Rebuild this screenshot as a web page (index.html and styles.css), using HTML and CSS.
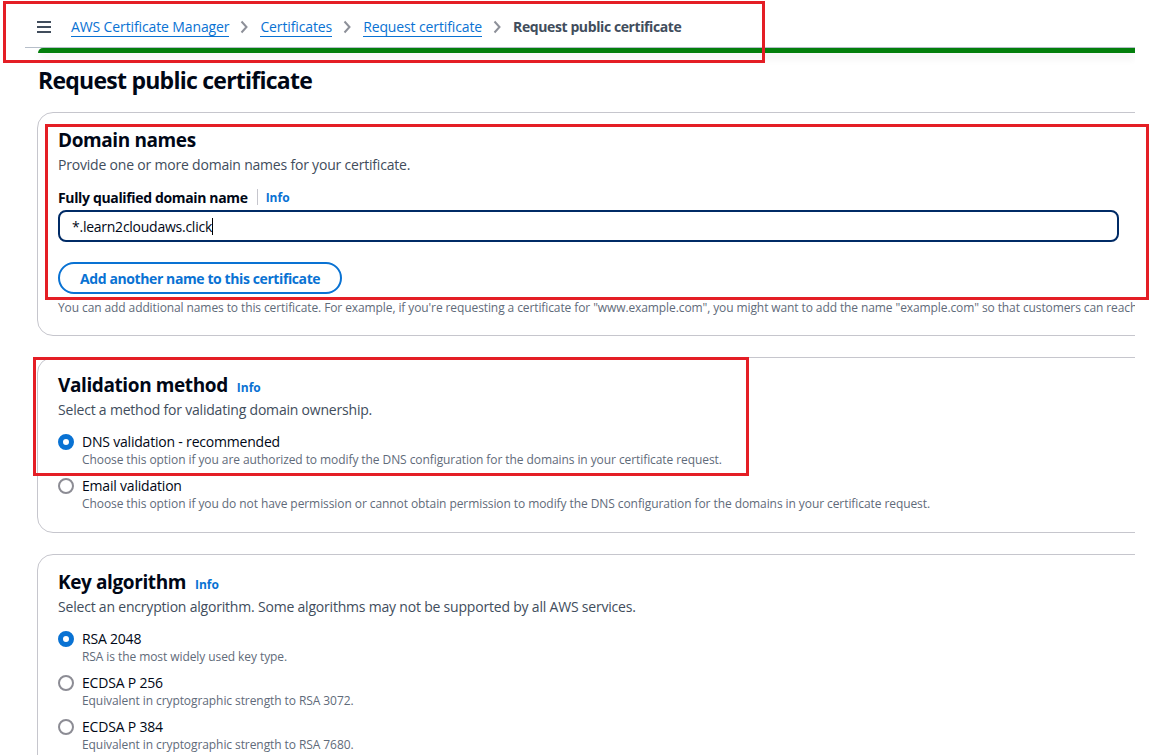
FILE: index.html
```html
<!DOCTYPE html>
<html lang="en">
<head>
<meta charset="utf-8">
<title>Request public certificate</title>
<link rel="stylesheet" href="styles.css">
</head>
<body>
<div class="viewport">
  <header class="topbar">
    <button class="menu" aria-label="Menu">
      <svg width="16" height="14" viewBox="0 0 16 14"><rect x="1" y="1" width="14" height="2" fill="#414d5c"/><rect x="1" y="6" width="14" height="2" fill="#414d5c"/><rect x="1" y="11" width="14" height="2" fill="#414d5c"/></svg>
    </button>
    <nav class="crumbs">
      <a class="crumb" href="#">AWS Certificate Manager</a>
      <span class="sep"><svg width="10" height="14" viewBox="0 0 10 14"><path d="M2.5 1.5 L7.5 7 L2.5 12.5" fill="none" stroke="#8d9099" stroke-width="2"/></svg></span>
      <a class="crumb" href="#">Certificates</a>
      <span class="sep"><svg width="10" height="14" viewBox="0 0 10 14"><path d="M2.5 1.5 L7.5 7 L2.5 12.5" fill="none" stroke="#8d9099" stroke-width="2"/></svg></span>
      <a class="crumb" href="#">Request certificate</a>
      <span class="sep"><svg width="10" height="14" viewBox="0 0 10 14"><path d="M2.5 1.5 L7.5 7 L2.5 12.5" fill="none" stroke="#8d9099" stroke-width="2"/></svg></span>
      <span class="current">Request public certificate</span>
    </nav>
  </header>
  <div class="flash"></div>

  <main class="content">
    <h1 class="title">Request public certificate</h1>

    <section class="card">
      <h2 class="card-title">Domain names</h2>
      <p class="desc">Provide one or more domain names for your certificate.</p>
      <div class="label-row"><span class="label">Fully qualified domain name</span><span class="divider"></span><a class="info" href="#">Info</a></div>
      <div class="input"><span class="value">*.learn2cloudaws.click</span><span class="caret"></span></div>
      <button class="btn">Add another name to this certificate</button>
      <p class="hint">You can add additional names to this certificate. For example, if you're requesting a certificate for "www.example.com", you might want to add the name "example.com" so that customers can reach your site by either name.</p>
    </section>

    <section class="card card-radios">
      <h2 class="card-title">Validation method <a class="info" href="#">Info</a></h2>
      <p class="desc">Select a method for validating domain ownership.</p>
      <div class="radios">
        <div class="radio">
          <span class="dot checked"></span>
          <div class="radio-text"><div class="radio-label">DNS validation - recommended</div><div class="radio-desc">Choose this option if you are authorized to modify the DNS configuration for the domains in your certificate request.</div></div>
        </div>
        <div class="radio">
          <span class="dot"></span>
          <div class="radio-text"><div class="radio-label">Email validation</div><div class="radio-desc">Choose this option if you do not have permission or cannot obtain permission to modify the DNS configuration for the domains in your certificate request.</div></div>
        </div>
      </div>
    </section>

    <section class="card card-radios">
      <h2 class="card-title">Key algorithm <a class="info" href="#">Info</a></h2>
      <p class="desc">Select an encryption algorithm. Some algorithms may not be supported by all AWS services.</p>
      <div class="radios">
        <div class="radio">
          <span class="dot checked"></span>
          <div class="radio-text"><div class="radio-label">RSA 2048</div><div class="radio-desc">RSA is the most widely used key type.</div></div>
        </div>
        <div class="radio">
          <span class="dot"></span>
          <div class="radio-text"><div class="radio-label">ECDSA P 256</div><div class="radio-desc">Equivalent in cryptographic strength to RSA 3072.</div></div>
        </div>
        <div class="radio">
          <span class="dot"></span>
          <div class="radio-text"><div class="radio-label">ECDSA P 384</div><div class="radio-desc">Equivalent in cryptographic strength to RSA 7680.</div></div>
        </div>
      </div>
    </section>
  </main>
</div>

<div class="mark mark-top"></div>
<div class="mark mark-domain"></div>
<div class="mark mark-validation"></div>
</body>
</html>
```

FILE: styles.css
```css
* { box-sizing: border-box; }
html, body { margin: 0; padding: 0; background: #fff; }
body {
  position: relative;
  font-family: "Open Sans", "Noto Sans", "Liberation Sans", sans-serif;
  color: #000716;
  height: 755px;
  overflow: hidden;
}
.viewport {
  width: 1135px;
  overflow: hidden;
  height: 755px;
}
.topbar {
  margin-left: 25px;
  height: 48px;
  border-bottom: 1px solid #b6bec9;
  display: flex;
  align-items: center;
  padding-left: 11px;
  padding-top: 7px;
}
.menu {
  border: 0;
  background: none;
  padding: 0;
  width: 16px;
  height: 14px;
  display: flex;
}
.crumbs {
  display: flex;
  align-items: center;
  margin-left: 19px;
  font-size: 14px;
  line-height: 20px;
}
.crumb {
  color: #0972d3;
  text-decoration: none;
  border-bottom: 1px solid #0972d3;
  line-height: 18px;
  letter-spacing: -0.12px;
}
.sep {
  display: flex;
  margin: 0 11px 0 10px;
}
.current {
  color: #414d5c;
  font-weight: 700;
  letter-spacing: -0.4px;
}
.flash {
  margin-left: 38px;
  height: 5px;
  background: #037f0c;
  border-top-left-radius: 6px;
  box-shadow: 0 5px 8px rgba(0, 7, 22, 0.07);
}
.content {
  padding-left: 37px;
}
.title {
  margin: 12px 0 17px 1px;
  font-size: 23px;
  line-height: 30px;
  font-weight: 700;
  letter-spacing: -0.75px;
  color: #000716;
}
.card {
  width: 1200px;
  border: 1px solid #c6c6cd;
  border-radius: 16px;
  padding: 15px 20px 19px;
  margin-bottom: 21px;
}
.card-radios {
  padding-bottom: 20px;
}
.card-title {
  margin: 0;
  font-size: 19px;
  line-height: 24px;
  font-weight: 700;
  letter-spacing: -0.4px;
  display: flex;
  align-items: baseline;
  gap: 9px;
}
.card-title .info { font-size: 12px; line-height: 16px; letter-spacing: 0; }
.desc {
  margin: 3px 0 0;
  font-size: 14px;
  line-height: 20px;
  color: #414d5c;
  letter-spacing: -0.2px;
}
.info {
  color: #0972d3;
  font-weight: 700;
  font-size: 12px;
  text-decoration: none;
}
.label-row {
  margin-top: 12px;
  display: flex;
  align-items: center;
  height: 20px;
}
.label {
  font-size: 14px;
  font-weight: 700;
  color: #000716;
  letter-spacing: -0.35px;
}
.divider {
  width: 1px;
  height: 16px;
  background: #c6c6cd;
  margin: 0 8px 0 9px;
}
.input {
  margin-top: 3px;
  width: 1061px;
  height: 32px;
  border: 2px solid #002b66;
  border-radius: 8px;
  display: flex;
  align-items: center;
  padding-left: 12px;
  font-size: 14px;
  letter-spacing: -0.25px;
  color: #000716;
}
.caret {
  width: 1px;
  height: 17px;
  background: #000;
}
.btn {
  display: block;
  margin-top: 20px;
  height: 32px;
  padding: 0 20px;
  border: 2px solid #0972d3;
  border-radius: 20px;
  background: #fff;
  color: #0972d3;
  font-family: inherit;
  font-size: 14px;
  font-weight: 700;
  letter-spacing: -0.4px;
}
.hint {
  margin: 6px 0 0;
  font-size: 12px;
  line-height: 16px;
  color: #5f6b7a;
  white-space: nowrap;
  letter-spacing: -0.1px;
}
.radios {
  margin-top: 12px;
  display: flex;
  flex-direction: column;
  gap: 8px;
}
.radio {
  display: flex;
  align-items: flex-start;
}
.dot {
  flex: none;
  width: 16px;
  height: 16px;
  margin-top: 2px;
  border: 2px solid #8c8c94;
  border-radius: 50%;
  background: #fff;
}
.dot.checked {
  border: 5px solid #0972d3;
}
.radio-text {
  margin-left: 8px;
}
.radio-label {
  font-size: 14px;
  line-height: 20px;
  color: #000716;
  letter-spacing: -0.2px;
}
.radio-desc {
  font-size: 12px;
  line-height: 16px;
  color: #5f6b7a;
  letter-spacing: -0.08px;
}
.mark {
  position: absolute;
  border: 3px solid #e41e25;
  pointer-events: none;
}
.mark-top { left: 3px; top: 1px; width: 762px; height: 62px; }
.mark-domain { left: 45px; top: 124px; width: 1104px; height: 176px; }
.mark-validation { left: 33px; top: 357px; width: 716px; height: 119px; }
```
